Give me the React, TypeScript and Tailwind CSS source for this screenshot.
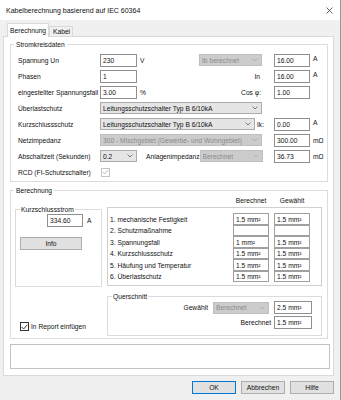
import React from 'react'

function Chevron({ disabled }: { disabled?: boolean }) {
  return (
    <svg width="6" height="4" viewBox="0 0 6 4" className="shrink-0">
      <path d="M0.5 0.5 L3 3 L5.5 0.5" fill="none" stroke={disabled ? '#a8a8a8' : '#606060'} strokeWidth="0.8" />
    </svg>
  )
}

function Sel({ text, className, disabled }: { text: string; className: string; disabled?: boolean }) {
  return (
    <div
      className={
        'h-[12px] shrink-0 flex items-center justify-between pl-[2px] pr-[3px] border whitespace-nowrap overflow-hidden ' +
        (disabled ? 'bg-[#cccccc] border-[#bfbfbf] text-[#8a8a8a] ' : 'bg-[#e5e5e5] border-[#acacac] ') +
        className
      }
    >
      <span className="overflow-hidden">{text}</span>
      <Chevron disabled={disabled} />
    </div>
  )
}

function Box({ text, className }: { text?: string; className: string }) {
  return (
    <div className={'h-[13px] shrink-0 flex items-center pl-[2px] border border-[#8f8f8f] bg-white whitespace-nowrap ' + className}>
      {text}
    </div>
  )
}

function Check({ disabled }: { disabled?: boolean }) {
  return (
    <div className={'w-[9px] h-[9px] shrink-0 border bg-white flex items-center justify-center ' + (disabled ? 'border-[#c4c4c4]' : 'border-[#333]')}>
      <svg width="7" height="6" viewBox="0 0 7 6">
        <path d="M0.7 3 L2.6 5 L6.3 0.8" fill="none" stroke={disabled ? '#b5b5b5' : '#222'} strokeWidth="0.9" />
      </svg>
    </div>
  )
}

function Row({ label, children }: { label: string; children?: React.ReactNode }) {
  return (
    <div className="flex items-center h-[16px]">
      <div className="w-[89px] shrink-0 pl-[7px] whitespace-nowrap">{label}</div>
      {children}
    </div>
  )
}

function Right({ value, unit, raised }: { value: string; unit: string; raised?: boolean }) {
  return (
    <>
      <Box text={value} className="w-[36px]" />
      <span className={'pl-[3px] whitespace-nowrap ' + (raised ? 'pb-[4px]' : '')}>{unit}</span>
    </>
  )
}

const ergebnis = [
  { t: '1. mechanische Festigkeit', b: '1.5 mm²', g: '1.5 mm²', h: 'h-[12px]' },
  { t: '2. Schutzmaßnahme', b: '', g: '', h: 'h-[11px]' },
  { t: '3. Spannungsfall', b: '1 mm²', g: '1.5 mm²', h: 'h-[12px]' },
  { t: '4. Kurzschlussschutz', b: '1.5 mm²', g: '1.5 mm²', h: 'h-[11px]' },
  { t: '5. Häufung und Temperatur', b: '1.5 mm²', g: '1.5 mm²', h: 'h-[12px]' },
  { t: '6. Überlastschutz', b: '1.5 mm²', g: '1.5 mm²', h: 'h-[11px]' },
]

export default function App() {
  return (
    <div className="w-[341px] h-[400px] bg-[#f0f0f0] overflow-hidden font-['Liberation_Sans',Arial,sans-serif] text-[6.7px] leading-[9px] text-[#111] border-r border-[#9a9a9a]">
      <div className="h-[20px] bg-white flex items-center justify-between pl-[6px] pr-[7px]">
        <span className="text-[7px]">Kabelberechnung basierend auf IEC 60364</span>
        <svg width="7" height="7" viewBox="0 0 7 7">
          <path d="M0.5 0.5 L6.5 6.5 M6.5 0.5 L0.5 6.5" stroke="#222" strokeWidth="0.7" />
        </svg>
      </div>

      <div className="h-[16px] flex items-end pl-[7px]">
        <div className="w-[42px] h-[14px] bg-white border border-b-0 border-[#d9d9d9] pl-[2px] pt-[2px] relative z-10 -mb-px">Berechnung</div>
        <div className="w-[24px] h-[10px] bg-[#f0f0f0] border border-b-0 border-[#d9d9d9] pl-[3px]">Kabel</div>
      </div>

      <div className="ml-[3px] w-[331px] h-[340px] bg-white border border-[#d9d9d9]">
        <fieldset className="ml-[6px] mt-[3px] w-[318px] border border-[#dcdcdc] pb-[1px]">
          <legend className="ml-[3px] px-[2px]">Stromkreisdaten</legend>
          <div className="pt-[3px]">
            <Row label="Spannung Un">
              <div className="w-[162px] flex items-center">
                <Box text="230" className="w-[37px]" />
                <span className="pl-[3px]">V</span>
                <div className="flex-1" />
                <Sel text="Ib berechnet" className="w-[63px]" disabled />
              </div>
              <div className="w-[12px]" />
              <Right value="16.00" unit="A" raised />
            </Row>
            <Row label="Phasen">
              <div className="w-[162px] flex items-center">
                <Box text="1" className="w-[37px]" />
                <div className="flex-1" />
                <span className="pr-[2px]">In</span>
              </div>
              <div className="w-[12px]" />
              <Right value="16.00" unit="A" raised />
            </Row>
            <Row label="eingestellter Spannungsfall">
              <div className="w-[162px] flex items-center">
                <Box text="3.00" className="w-[37px]" />
                <span className="pl-[3px]">%</span>
                <div className="flex-1" />
                <span className="pr-[1px]">Cos φ:</span>
              </div>
              <div className="w-[12px]" />
              <Box text="1.00" className="w-[36px]" />
            </Row>
            <Row label="Überlastschutz">
              <Sel text="Leitungsschutzschalter Typ B  6/10kA" className="w-[162px]" />
            </Row>
            <Row label="Kurzschlussschutz">
              <div className="w-[162px] flex items-center">
                <Sel text="Leitungsschutzschalter Typ B  6/10kA" className="w-[155px]" />
                <span className="pl-[2px] whitespace-nowrap">Ik:</span>
              </div>
              <div className="w-[12px]" />
              <Right value="0.00" unit="A" raised />
            </Row>
            <Row label="Netzimpedanz">
              <Sel text="300 - Mischgebiet (Gewerbe- und Wohngebiet)" className="w-[162px]" disabled />
              <div className="w-[12px]" />
              <Right value="300.00" unit="mΩ" />
            </Row>
            <Row label="Abschaltzeit (Sekunden)">
              <div className="w-[162px] flex items-center">
                <Sel text="0.2" className="w-[37px]" />
                <span className="pl-[9px] whitespace-nowrap">Anlagenimpedanz</span>
                <div className="flex-1" />
                <Sel text="Berechnet" className="w-[63px]" disabled />
              </div>
              <div className="w-[12px]" />
              <Right value="36.73" unit="mΩ" />
            </Row>
            <Row label="RCD (FI-Schutzschalter)">
              <div className="pl-[1px]">
                <Check disabled />
              </div>
            </Row>
          </div>
        </fieldset>

        <fieldset className="ml-[6px] mt-[4px] w-[318px] border border-[#dcdcdc] pb-[2px]">
          <legend className="ml-[3px] px-[2px]">Berechnung</legend>
          <div className="flex h-[10px] items-center">
            <div className="w-[222px]" />
            <div className="w-[36px] text-center">Berechnet</div>
            <div className="w-[5px]" />
            <div className="w-[36px] text-center">Gewählt</div>
          </div>

          <div className="flex items-start">
            <fieldset className="ml-[4px] w-[87px] h-[82px] border border-[#dcdcdc]">
              <legend className="ml-[4px] px-[1px]">Kurzschlussstrom</legend>
              <div className="flex items-center">
                <Box text="334.60" className="ml-[31px] w-[36px] h-[12px]" />
                <span className="pl-[4px]">A</span>
              </div>
              <button className="ml-[4px] mt-[10px] w-[62px] h-[13px] bg-[#e1e1e1] border border-[#adadad] flex items-center justify-center">
                Info
              </button>
            </fieldset>

            <div className="ml-[5px] mt-[2px] w-[215px] h-[79px] border border-[#cfcfcf] pt-[5px]">
              {ergebnis.map((r) => (
                <div key={r.t} className={'flex items-stretch ' + r.h}>
                  <div className="w-[125px] pl-[2px] flex items-center whitespace-nowrap">{r.t}</div>
                  <div className="w-[36px] border border-[#a0a0a0] pl-[2px] flex items-center whitespace-nowrap">{r.b}</div>
                  <div className="w-[5px]" />
                  <div className="w-[36px] border border-[#a0a0a0] pl-[2px] flex items-center whitespace-nowrap">{r.g}</div>
                </div>
              ))}
            </div>
          </div>

          <div className="flex items-end">
            <div className="w-[96px] pl-[9px] pb-[5px] flex items-center gap-[2px]">
              <Check />
              <span className="whitespace-nowrap">In Report einfügen</span>
            </div>
            <fieldset className="mt-[5px] w-[215px] h-[44px] border border-[#dcdcdc]">
              <legend className="ml-[4px] px-[1px]">Querschnitt</legend>
              <div className="flex flex-col gap-[2px] pr-[9px]">
                <div className="h-[13px] flex items-center justify-end">
                  <span className="pr-[5px]">Gewählt</span>
                  <Sel text="Berechnet" className="w-[56px]" disabled />
                  <Box text="2.5 mm²" className="ml-[5px] w-[38px]" />
                </div>
                <div className="h-[13px] flex items-center justify-end">
                  <span className="pr-[3px]">Berechnet</span>
                  <Box text="1.5 mm²" className="w-[38px]" />
                </div>
              </div>
            </fieldset>
          </div>
        </fieldset>

        <div className="ml-[6px] mt-[5px] w-[320px] h-[25px] bg-white border border-[#c2c2c2]" />
      </div>

      <div className="flex justify-end gap-[5px] pr-[6px] mt-[5px]">
        <button className="w-[44px] h-[13px] bg-[#e1e1e1] border border-[#0078d7] flex items-center justify-center">OK</button>
        <button className="w-[44px] h-[13px] bg-[#e1e1e1] border border-[#adadad] flex items-center justify-center">Abbrechen</button>
        <button className="w-[44px] h-[13px] bg-[#e1e1e1] border border-[#adadad] flex items-center justify-center">Hilfe</button>
      </div>
    </div>
  )
}
